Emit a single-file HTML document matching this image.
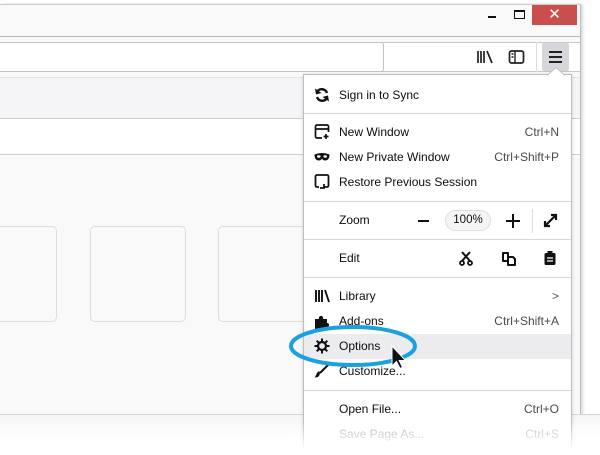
<!DOCTYPE html>
<html><head><style>
*{margin:0;padding:0;box-sizing:border-box}
body{width:600px;height:455px;overflow:hidden;background:#fff;position:relative;font-family:"Segoe UI","Liberation Sans","DejaVu Sans",sans-serif;font-size:12px;color:#0c0c0d}
.a{position:absolute}
.row{position:absolute;left:304px;width:267px;height:25px;line-height:25px}
.row .t{position:absolute;left:35px}
.row .k{position:absolute;right:12px;color:#4a4a4f}
.row svg{position:absolute;left:10px;top:4px}
.sep{position:absolute;left:304px;width:267px;height:1px;background:#d7d7db}
</style></head><body>
<div class="a" style="left:0;top:4px;width:581px;height:411px;background:#f9f9fa;border-top:1px solid #ccc;border-right:1px solid #bbb;box-shadow:2px 0 3px rgba(0,0,0,.15)"></div>
<div class="a" style="left:0;top:36px;width:580px;height:1px;background:#b8b8b8"></div>
<div class="a" style="left:0;top:42px;width:580px;height:1px;background:#c8c8c8"></div>
<div class="a" style="left:0;top:43px;width:580px;height:28px;background:#fff"></div>
<div class="a" style="left:0;top:71px;width:580px;height:1px;background:#c8c8c8"></div>
<div class="a" style="left:0;top:77px;width:580px;height:41px;background:#f5f5f7;border-top:1px solid #e4e4e6"></div>
<div class="a" style="left:0;top:118px;width:580px;height:37px;background:#fff;border-top:1px solid #ccc;border-bottom:1px solid #ccc"></div>
<div class="a" style="left:-40px;top:226px;width:97px;height:96px;border:1px solid #ddd;border-radius:5px"></div>
<div class="a" style="left:90px;top:226px;width:96px;height:96px;border:1px solid #ddd;border-radius:5px"></div>
<div class="a" style="left:218px;top:226px;width:96px;height:96px;border:1px solid #ddd;border-radius:5px"></div>
<div class="a" style="left:0;top:414px;width:600px;height:1px;background:#d4d4d8"></div>
<div class="a" style="left:0;top:415px;width:600px;height:40px;background:linear-gradient(#f6f6f6,#fff 70%)"></div>
<div class="a" style="left:488px;top:16px;width:8px;height:2px;background:#111"></div>
<div class="a" style="left:514px;top:10px;width:11px;height:9px;border:1px solid #111;border-top-width:2px"></div>
<div class="a" style="left:532px;top:5px;width:45px;height:20px;background:#c94f4f;color:#fff;text-align:center;line-height:20px;font-size:15px;font-weight:bold">✕</div>
<div class="a" style="left:-4px;top:42px;width:388px;height:30px;border:1px solid #c2c2c2;border-radius:3px;background:#fff"></div>
<svg class="a" style="left:476px;top:49px" width="18" height="16"><path d="M2 2v12M5 2v12M8 2v12M11 2l5 12" stroke="#222" stroke-width="1.7" fill="none"/></svg>
<svg class="a" style="left:508px;top:49px" width="18" height="16"><rect x="1.5" y="2" width="14" height="12" rx="2" stroke="#222" stroke-width="1.7" fill="none"/><path d="M7 2v12M3.5 5h2M3.5 8h2" stroke="#222" stroke-width="1.4"/></svg>
<div class="a" style="left:536px;top:42px;width:1px;height:30px;background:#ddd"></div>
<div class="a" style="left:542px;top:43px;width:27px;height:28px;background:#d7d7db;border-radius:2px"></div>
<svg class="a" style="left:548px;top:50px" width="16" height="14"><path d="M1 2h13M1 7h13M1 12h13" stroke="#222" stroke-width="1.9"/></svg>
<div class="a" style="left:303px;top:74px;width:269px;height:381px;background:#fff;border:1px solid #bdbdbd;border-bottom:none;box-shadow:0 1px 4px rgba(0,0,0,.15)"></div>
<svg class="a" style="left:547px;top:67px" width="18" height="9"><path d="M0 8.5L9 0.5L18 8.5" fill="#fff" stroke="#bdbdbd"/></svg>
<div class="row" style="top:83px"><svg width="16" height="16"><path d="M13 6A5.5 5.5 0 0 0 3 5M3 10a5.5 5.5 0 0 0 10 1" stroke="#111" stroke-width="2.4" fill="none"/><path d="M1 1.5l1 6 5.5-1.5zM15 14.5l-1-6-5.5 1.5z" fill="#111"/></svg><span class="t">Sign in to Sync</span></div>
<div class="sep" style="top:113px"></div>
<div class="row" style="top:120px"><svg width="16" height="16"><path d="M8 14H3a1.5 1.5 0 0 1-1.5-1.5v-10A1.5 1.5 0 0 1 3 1h10a1.5 1.5 0 0 1 1.5 1.5V8M1.5 5h13M12 10v5M9.5 12.5h5" stroke="#111" stroke-width="1.7" fill="none"/></svg><span class="t">New Window</span><span class="k">Ctrl+N</span></div>
<div class="row" style="top:145px"><svg width="16" height="16"><path d="M0.5 5.5q7.5-3 15 0q0 6-4.5 6q-2 0-3-2q-1 2-3 2q-4.5 0-4.5-6z" fill="#111"/><ellipse cx="4.8" cy="7.5" rx="1.8" ry="1.2" fill="#fff"/><ellipse cx="11.2" cy="7.5" rx="1.8" ry="1.2" fill="#fff"/></svg><span class="t">New Private Window</span><span class="k">Ctrl+Shift+P</span></div>
<div class="row" style="top:170px"><svg width="16" height="16"><path d="M5 13H3a1.5 1.5 0 0 1-1.5-1.5v-9A1.5 1.5 0 0 1 3 1h10a1.5 1.5 0 0 1 1.5 1.5v9A1.5 1.5 0 0 1 13 13h-3" stroke="#111" stroke-width="1.8" fill="none"/><path d="M10 10v4H6" stroke="#111" stroke-width="1.8" fill="none"/></svg><span class="t">Restore Previous Session</span></div>
<div class="sep" style="top:201px"></div>
<div class="row" style="top:208px"><span class="t">Zoom</span></div>
<div class="a" style="left:418px;top:220px;width:11px;height:2px;background:#111"></div>
<div class="a" style="left:445px;top:210px;width:46px;height:21px;border:1px solid #ddd;border-radius:11px;background:#f5f5f5;text-align:center;line-height:19px;font-size:11.5px">100%</div>
<svg class="a" style="left:506px;top:214px" width="14" height="14"><path d="M7 0v14M0 7h14" stroke="#111" stroke-width="2"/></svg>
<div class="a" style="left:532px;top:209px;width:1px;height:24px;background:#ddd"></div>
<svg class="a" style="left:543px;top:213px" width="15" height="15"><path d="M2 13L13 2M8 2h5v5M2 8v5h5" stroke="#111" stroke-width="2.2" fill="none"/></svg>
<div class="sep" style="top:239px"></div>
<div class="row" style="top:246px"><span class="t">Edit</span></div>
<svg class="a" style="left:459px;top:251px" width="14" height="15"><path d="M3 1l8 9M11 1L3 10" stroke="#111" stroke-width="2"/><circle cx="3" cy="12" r="2" stroke="#111" stroke-width="1.8" fill="none"/><circle cx="11" cy="12" r="2" stroke="#111" stroke-width="1.8" fill="none"/></svg>
<svg class="a" style="left:501px;top:251px" width="15" height="15"><path d="M2 2h5v8H2zM7 6h5l2 2v6H7z" stroke="#111" stroke-width="2" fill="none" stroke-linejoin="round"/></svg>
<svg class="a" style="left:543px;top:250px" width="14" height="16"><rect x="1.5" y="3" width="11" height="12" rx="1.5" fill="#111"/><rect x="4.5" y="1" width="5" height="3" fill="#111"/><path d="M4 8h6M4 11h6" stroke="#fff" stroke-width="1.2"/></svg>
<div class="sep" style="top:277px"></div>
<div class="row" style="top:284px"><svg width="16" height="16"><path d="M2 2v12M5 2v12M8 2v12M11 2l4 12" stroke="#111" stroke-width="1.9" fill="none"/></svg><span class="t">Library</span><span class="k" style="color:#555">&gt;</span></div>
<div class="row" style="top:309px"><svg width="16" height="16"><path d="M1 6h4a2.2 2.2 0 1 1 4 0h4v4a2 2 0 1 1 0 4v2H1z" fill="#111"/></svg><span class="t">Add-ons</span><span class="k">Ctrl+Shift+A</span></div>
<div class="row" style="top:334px;background:#ececee"><svg width="16" height="16"><circle cx="8" cy="8" r="4" stroke="#111" stroke-width="2.2" fill="none"/><path d="M8 0.5v3M8 12.5v3M0.5 8h3M12.5 8h3M2.7 2.7l2.2 2.2M11.1 11.1l2.2 2.2M2.7 13.3l2.2-2.2M11.1 4.9l2.2-2.2" stroke="#111" stroke-width="2"/></svg><span class="t">Options</span></div>
<div class="row" style="top:359px"><svg width="16" height="16"><path d="M15 1L6 10" stroke="#111" stroke-width="2"/><path d="M6 9q-2-1.5-3.5 2t-2 3.5q3.5 0 4.5-1.5t1-4z" fill="#111"/></svg><span class="t">Customize...</span></div>
<div class="sep" style="top:390px"></div>
<div class="row" style="top:397px"><span class="t">Open File...</span><span class="k">Ctrl+O</span></div>
<div class="row" style="top:422px;color:#aaa"><span class="t">Save Page As...</span><span class="k" style="color:#bbb">Ctrl+S</span></div>
<div class="a" style="left:290px;top:420px;width:310px;height:35px;background:linear-gradient(rgba(255,255,255,0),#fff 85%)"></div>
<svg class="a" style="left:0;top:0" width="600" height="455"><ellipse cx="353" cy="346" rx="62" ry="19" fill="none" stroke="#1ba1e2" stroke-width="4"/><path d="M392 346v20l4.5-4.5 3.5 7 2.5-1.2-3.3-6.8h6.3z" fill="#111" stroke="#fff" stroke-width="1"/></svg>
</body></html>
